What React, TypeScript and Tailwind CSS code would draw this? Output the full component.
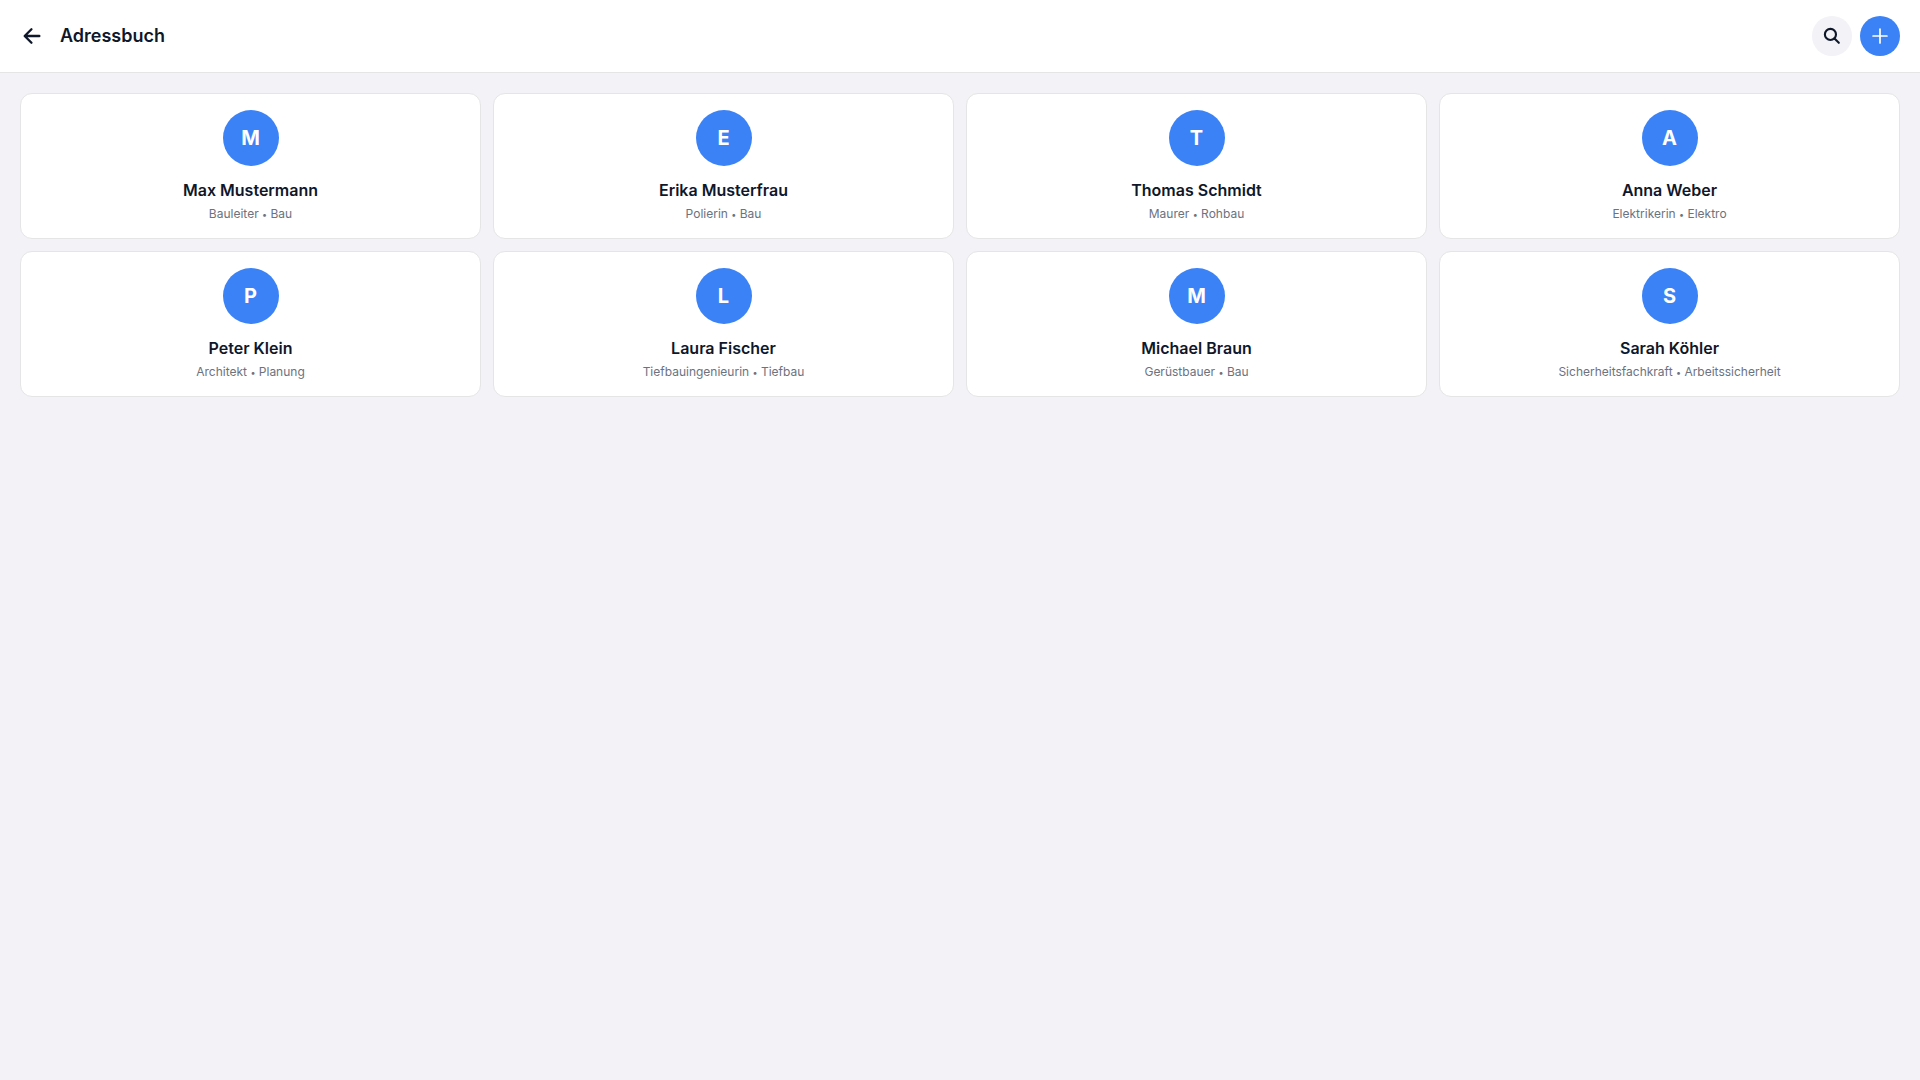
const contacts = [
  { name: "Max Mustermann", role: "Bauleiter", department: "Bau" },
  { name: "Erika Musterfrau", role: "Polierin", department: "Bau" },
  { name: "Thomas Schmidt", role: "Maurer", department: "Rohbau" },
  { name: "Anna Weber", role: "Elektrikerin", department: "Elektro" },
  { name: "Peter Klein", role: "Architekt", department: "Planung" },
  { name: "Laura Fischer", role: "Tiefbauingenieurin", department: "Tiefbau" },
  { name: "Michael Braun", role: "Gerüstbauer", department: "Bau" },
  { name: "Sarah Köhler", role: "Sicherheitsfachkraft", department: "Arbeitssicherheit" },
];

const Header = () => {
  return <header className="flex items-center gap-2 border-b border-[#e5e5e5] bg-white py-4 pl-3 pr-5">
      <button type="button" aria-label="Zurück" className="flex h-10 w-10 items-center justify-center">
        <svg viewBox="0 0 512 512" className="h-6 w-6" fill="none" stroke="currentColor" strokeWidth="50" strokeLinecap="round" strokeLinejoin="round" aria-hidden="true">
          <path d="M244 400 100 256l144-144M120 256h292" />
        </svg>
      </button>
      <h1 className="flex-1 text-lg font-semibold">Adressbuch</h1>
      <button type="button" aria-label="Suchen" className="flex h-10 w-10 items-center justify-center rounded-full bg-[#f2f2f7]">
        <svg viewBox="0 0 512 512" className="h-5 w-5" fill="none" stroke="currentColor" strokeWidth="54" strokeLinecap="round" aria-hidden="true">
          <circle cx="216" cy="216" r="142" />
          <path d="m320 320 110 110" />
        </svg>
      </button>
      <button type="button" aria-label="Kontakt hinzufügen" className="flex h-10 w-10 items-center justify-center rounded-full bg-[#3b82f6] text-white">
        <svg viewBox="0 0 512 512" className="h-6 w-6" fill="none" stroke="currentColor" strokeWidth="36" strokeLinecap="round" aria-hidden="true">
          <path d="M256 108v296M404 256H108" />
        </svg>
      </button>
    </header>;
};

const ContactCard = ({ name, role, department }: { name: string; role: string; department: string }) => {
  return <li className="flex flex-col items-center rounded-xl border border-[#e5e5e5] bg-white p-4 text-center">
      {/* Avatar with initial */}
      <div className="flex h-14 w-14 items-center justify-center rounded-full bg-[#3b82f6] text-xl font-bold text-white" aria-hidden="true">
        {name[0]}
      </div>
      <h2 className="mt-3 text-base font-semibold">{name}</h2>
      <p className="mt-1 text-xs text-[#6b7280]">{role} <span className="text-[9px] leading-none">•</span> {department}</p>
    </li>;
};

const App = () => {
  return <div className="min-h-screen bg-[#f2f2f7] font-['Inter',sans-serif] text-[#0f172a]">
      <Header />
      <main className="p-5">
        <ul className="grid grid-cols-1 gap-3 sm:grid-cols-2 lg:grid-cols-4">
          {contacts.map((contact) => <ContactCard key={contact.name} {...contact} />)}
        </ul>
      </main>
    </div>;
};
export default App;
